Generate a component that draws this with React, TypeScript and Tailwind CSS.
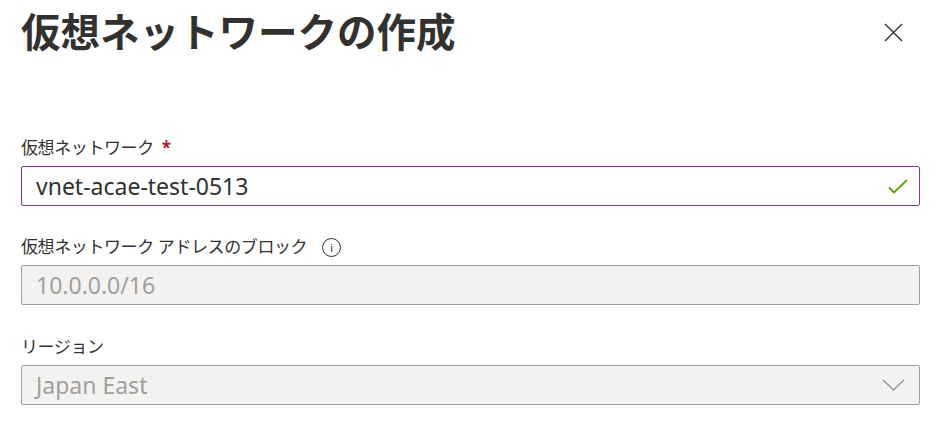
const font = { fontFamily: '"Noto Sans", "Noto Sans CJK JP", sans-serif' };

function Label({ text, required, info }: { text: string; required?: boolean; info?: boolean }) {
  return (
    <div className="flex h-6 items-center text-[17px] leading-6 text-[#323130]">
      <span className="tracking-[-0.4px]">{text}</span>
      {required && <span className="ml-2 font-bold text-[#a4262c]">*</span>}
      {info && (
        <span className="ml-[15px] flex h-[19px] w-[19px] items-center justify-center rounded-full border border-[#323130] text-[11px] leading-none">
          i
        </span>
      )}
    </div>
  );
}

export default function App() {
  return (
    <div className="h-[425px] w-[940px] bg-white pl-[21px] pr-[20px]" style={font}>
      <div className="flex items-start justify-between pt-[7px]">
        <h1 className="text-[39.5px] font-bold leading-[50px] text-[#323130]">仮想ネットワークの作成</h1>
        <button className="mr-[17px] mt-[16px] text-[#323130]">
          <svg width="19" height="19" viewBox="0 0 19 19" fill="none" stroke="currentColor" strokeWidth="1.4">
            <path d="M1 1 18 18M18 1 1 18" />
          </svg>
        </button>
      </div>

      <div className="mt-[79px] flex flex-col">
        <Label text="仮想ネットワーク" required />
        <div className="mt-1.5 flex h-10 items-center justify-between rounded-[2px] border border-[#8a34a1] pl-[14px] pr-[11px] text-[23px] text-[#323130]">
          <span>vnet-acae-test-0513</span>
          <svg width="20" height="15" viewBox="0 0 20 15" fill="none" stroke="#57a300" strokeWidth="1.8">
            <path d="M1 8.5 6 13.5 19 1" />
          </svg>
        </div>

        <div className="mt-[29px]">
          <Label text="仮想ネットワーク アドレスのブロック" info />
        </div>
        <div className="mt-1.5 flex h-10 items-center rounded-[2px] border border-[#a19f9d] bg-[#f3f2f1] pl-[14px] text-[23px] text-[#a19f9d]">
          10.0.0.0/16
        </div>

        <div className="mt-[30px]">
          <Label text="リージョン" />
        </div>
        <div className="mt-1.5 flex h-10 items-center justify-between rounded-[2px] border border-[#a19f9d] bg-[#f3f2f1] pl-[14px] pr-[14px] text-[23px] text-[#a19f9d]">
          <span>Japan East</span>
          <svg width="23" height="12" viewBox="0 0 23 12" fill="none" stroke="#8a8886" strokeWidth="1.2">
            <path d="M1 1 11.5 11 22 1" />
          </svg>
        </div>
      </div>
    </div>
  );
}
